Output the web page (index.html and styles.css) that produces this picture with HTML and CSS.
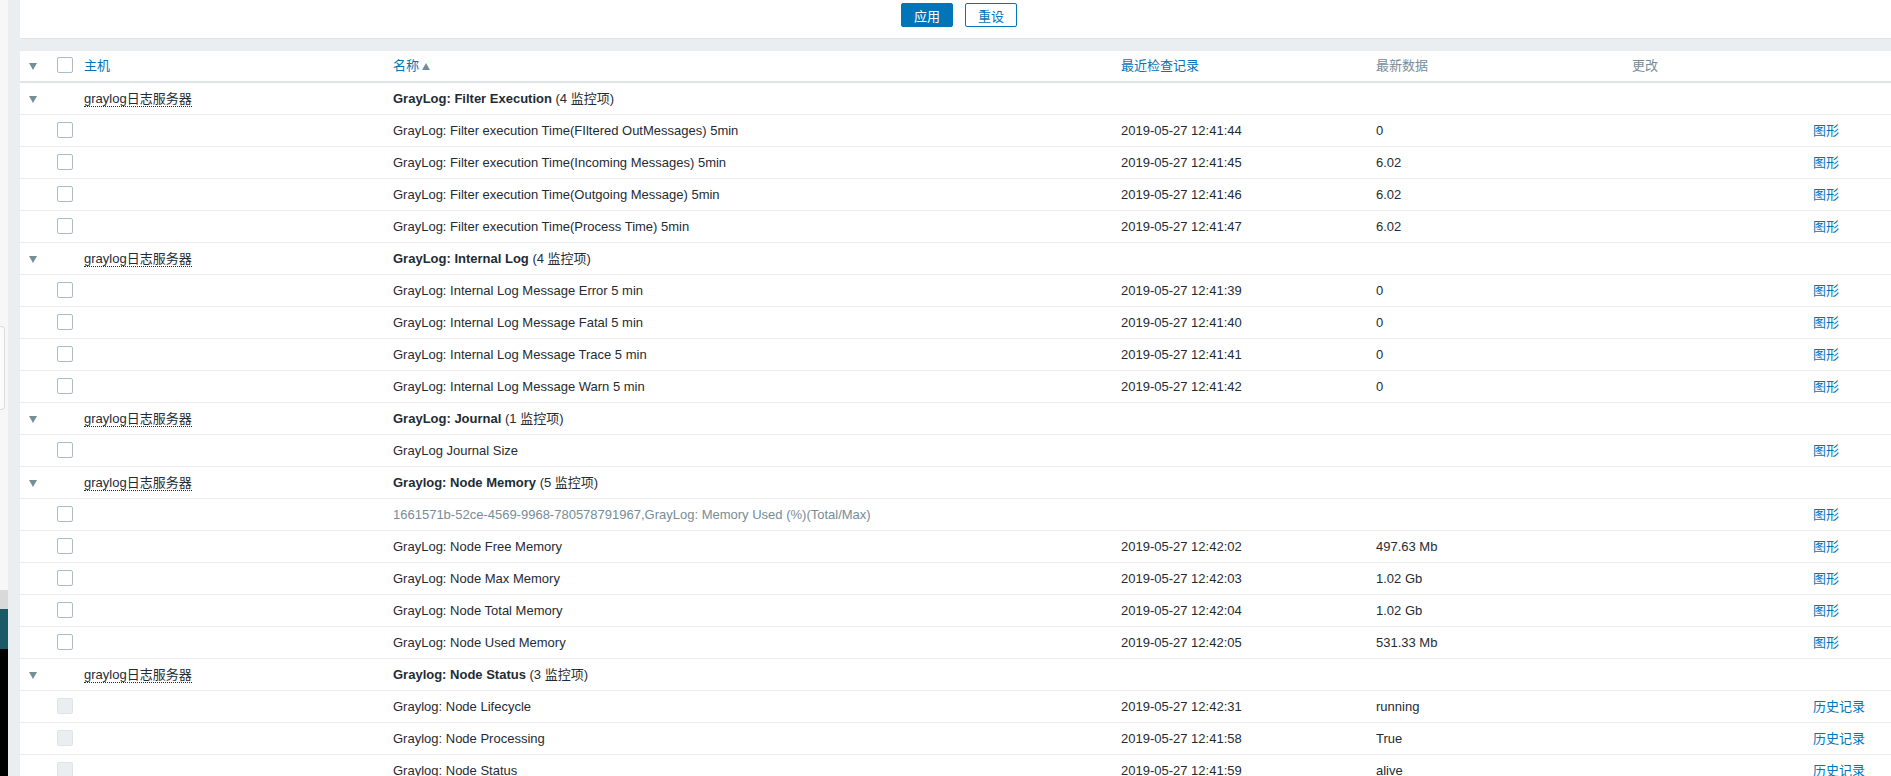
FILE: index.html
```html
<!DOCTYPE html>
<html lang="zh">
<head>
<meta charset="utf-8">
<title>最新数据</title>
<link rel="stylesheet" href="styles.css">
</head>
<body>
<div class="page">
  <div class="side">
    <div class="side-top"></div>
    <div class="side-box"></div>
    <div class="side-mid"></div>
    <div class="side-gray"></div>
    <div class="side-teal"></div>
    <div class="side-black"></div>
  </div>
  <main class="main">
    <div class="filter">
      <div class="btns">
        <button class="btn primary">应用</button>
        <button class="btn alt">重设</button>
      </div>
    </div>
    <div class="panel">
      <table class="list">
        <colgroup>
          <col class="c-tog"><col class="c-chk"><col class="c-host"><col class="c-name"><col class="c-time"><col class="c-val"><col class="c-chg"><col>
        </colgroup>
        <thead>
          <tr>
            <th class="tog"><span class="tri"></span></th>
            <th class="chk"><span class="box"></span></th>
            <th><a class="lnk">主机</a></th>
            <th><a class="lnk">名称</a><span class="up"></span></th>
            <th><a class="lnk">最近检查记录</a></th>
            <th class="muted">最新数据</th>
            <th class="muted">更改</th>
            <th></th>
          </tr>
        </thead>
        <tbody>
          <tr class="grp">
            <td class="tog"><span class="tri"></span></td><td></td>
            <td><span class="host">graylog日志服务器</span></td>
            <td colspan="5"><b>GrayLog: Filter Execution</b> (4 监控项)</td>
          </tr>
          <tr><td></td><td class="chk"><span class="box"></span></td><td></td><td>GrayLog: Filter execution Time(FIltered OutMessages) 5min</td><td>2019-05-27 12:41:44</td><td>0</td><td></td><td><a class="lnk">图形</a></td></tr>
          <tr><td></td><td class="chk"><span class="box"></span></td><td></td><td>GrayLog: Filter execution Time(Incoming Messages) 5min</td><td>2019-05-27 12:41:45</td><td>6.02</td><td></td><td><a class="lnk">图形</a></td></tr>
          <tr><td></td><td class="chk"><span class="box"></span></td><td></td><td>GrayLog: Filter execution Time(Outgoing Message) 5min</td><td>2019-05-27 12:41:46</td><td>6.02</td><td></td><td><a class="lnk">图形</a></td></tr>
          <tr><td></td><td class="chk"><span class="box"></span></td><td></td><td>GrayLog: Filter execution Time(Process Time) 5min</td><td>2019-05-27 12:41:47</td><td>6.02</td><td></td><td><a class="lnk">图形</a></td></tr>

          <tr class="grp">
            <td class="tog"><span class="tri"></span></td><td></td>
            <td><span class="host">graylog日志服务器</span></td>
            <td colspan="5"><b>GrayLog: Internal Log</b> (4 监控项)</td>
          </tr>
          <tr><td></td><td class="chk"><span class="box"></span></td><td></td><td>GrayLog: Internal Log Message Error 5 min</td><td>2019-05-27 12:41:39</td><td>0</td><td></td><td><a class="lnk">图形</a></td></tr>
          <tr><td></td><td class="chk"><span class="box"></span></td><td></td><td>GrayLog: Internal Log Message Fatal 5 min</td><td>2019-05-27 12:41:40</td><td>0</td><td></td><td><a class="lnk">图形</a></td></tr>
          <tr><td></td><td class="chk"><span class="box"></span></td><td></td><td>GrayLog: Internal Log Message Trace 5 min</td><td>2019-05-27 12:41:41</td><td>0</td><td></td><td><a class="lnk">图形</a></td></tr>
          <tr><td></td><td class="chk"><span class="box"></span></td><td></td><td>GrayLog: Internal Log Message Warn 5 min</td><td>2019-05-27 12:41:42</td><td>0</td><td></td><td><a class="lnk">图形</a></td></tr>

          <tr class="grp">
            <td class="tog"><span class="tri"></span></td><td></td>
            <td><span class="host">graylog日志服务器</span></td>
            <td colspan="5"><b>GrayLog: Journal</b> (1 监控项)</td>
          </tr>
          <tr><td></td><td class="chk"><span class="box"></span></td><td></td><td>GrayLog Journal Size</td><td></td><td></td><td></td><td><a class="lnk">图形</a></td></tr>

          <tr class="grp">
            <td class="tog"><span class="tri"></span></td><td></td>
            <td><span class="host">graylog日志服务器</span></td>
            <td colspan="5"><b>Graylog: Node Memory</b> (5 监控项)</td>
          </tr>
          <tr><td></td><td class="chk"><span class="box"></span></td><td></td><td class="muted">1661571b-52ce-4569-9968-780578791967,GrayLog: Memory Used (%)(Total/Max)</td><td></td><td></td><td></td><td><a class="lnk">图形</a></td></tr>
          <tr><td></td><td class="chk"><span class="box"></span></td><td></td><td>GrayLog: Node Free Memory</td><td>2019-05-27 12:42:02</td><td>497.63 Mb</td><td></td><td><a class="lnk">图形</a></td></tr>
          <tr><td></td><td class="chk"><span class="box"></span></td><td></td><td>GrayLog: Node Max Memory</td><td>2019-05-27 12:42:03</td><td>1.02 Gb</td><td></td><td><a class="lnk">图形</a></td></tr>
          <tr><td></td><td class="chk"><span class="box"></span></td><td></td><td>GrayLog: Node Total Memory</td><td>2019-05-27 12:42:04</td><td>1.02 Gb</td><td></td><td><a class="lnk">图形</a></td></tr>
          <tr><td></td><td class="chk"><span class="box"></span></td><td></td><td>GrayLog: Node Used Memory</td><td>2019-05-27 12:42:05</td><td>531.33 Mb</td><td></td><td><a class="lnk">图形</a></td></tr>

          <tr class="grp">
            <td class="tog"><span class="tri"></span></td><td></td>
            <td><span class="host">graylog日志服务器</span></td>
            <td colspan="5"><b>Graylog: Node Status</b> (3 监控项)</td>
          </tr>
          <tr><td></td><td class="chk"><span class="box off"></span></td><td></td><td>Graylog: Node Lifecycle</td><td>2019-05-27 12:42:31</td><td>running</td><td></td><td><a class="lnk">历史记录</a></td></tr>
          <tr><td></td><td class="chk"><span class="box off"></span></td><td></td><td>Graylog: Node Processing</td><td>2019-05-27 12:41:58</td><td>True</td><td></td><td><a class="lnk">历史记录</a></td></tr>
          <tr><td></td><td class="chk"><span class="box off"></span></td><td></td><td>Graylog: Node Status</td><td>2019-05-27 12:41:59</td><td>alive</td><td></td><td><a class="lnk">历史记录</a></td></tr>
        </tbody>
      </table>
    </div>
  </main>
</div>
</body>
</html>
```

FILE: styles.css
```css
html, body {
  margin: 0;
  padding: 0;
}
body {
  font-family: "Liberation Sans", Arial, "Noto Sans CJK SC", sans-serif;
  font-size: 13px;
  color: #1f2c33;
  background: #ebeef0;
  height: 776px;
  overflow: hidden;
}
.page {
  display: flex;
  height: 776px;
}
.side {
  width: 8px;
  flex: none;
  display: flex;
  flex-direction: column;
  background: #f7f7f7;
}
.side-top {
  height: 326px;
  flex: none;
}
.side-box {
  height: 82px;
  width: 4px;
  flex: none;
  border: 1px solid #dcdcdc;
  border-left: 0;
  border-radius: 0 4px 4px 0;
  background: #fbfbfb;
}
.side-mid {
  height: 180px;
  flex: none;
}
.side-gray {
  height: 19px;
  flex: none;
  background: #d9d9d9;
}
.side-teal {
  height: 40px;
  flex: none;
  background: #1a5965;
}
.side-black {
  flex: 1;
  background: #000;
}
.main {
  flex: 1;
  min-width: 0;
  padding-left: 12px;
  display: flex;
  flex-direction: column;
  gap: 12px;
}
.filter {
  flex: none;
  height: 38px;
  background: #fff;
  border-bottom: 1px solid #dfe4e7;
}
.btns {
  display: flex;
  justify-content: center;
  gap: 12px;
  padding: 3px 0 0 7px;
}
.btn {
  height: 24px;
  width: 52px;
  padding: 0;
  font-family: inherit;
  font-size: 13px;
  border-radius: 2px;
  border: 1px solid #0275b8;
}
.btn.primary {
  background: #0275b8;
  color: #fff;
}
.btn.alt {
  background: #fff;
  color: #0275b8;
}
.panel {
  flex: 1;
  min-height: 0;
  overflow: hidden;
  background: #fff;
}
.list {
  width: 100%;
  border-collapse: collapse;
  table-layout: fixed;
}
.c-tog { width: 32px; }
.c-chk { width: 27px; }
.c-host { width: 309px; }
.c-name { width: 728px; }
.c-time { width: 255px; }
.c-val { width: 256px; }
.c-chg { width: 181px; }
.list th, .list td {
  text-align: left;
  font-weight: normal;
  padding: 8px 5px;
  line-height: 15px;
  height: 15px;
  white-space: nowrap;
  overflow: hidden;
  vertical-align: middle;
}
.list th {
  padding: 7px 5px 8px;
  border-bottom: 2px solid #dfe4e7;
}
.list td {
  border-bottom: 1px solid #ebeef0;
}
.list td.chk {
  padding-top: 7px;
  padding-bottom: 8px;
  height: 16px;
}
.list th.chk {
  padding-top: 6px;
  padding-bottom: 8px;
  height: 16px;
}
.list .tog {
  padding-left: 9px;
}
.tri {
  display: inline-block;
  width: 0;
  height: 0;
  border-left: 4px solid transparent;
  border-right: 4px solid transparent;
  border-top: 7px solid #768d99;
  vertical-align: middle;
}
.up {
  display: inline-block;
  width: 0;
  height: 0;
  margin-left: 3px;
  border-left: 4px solid transparent;
  border-right: 4px solid transparent;
  border-bottom: 7px solid #768d99;
  vertical-align: 0;
}
.box {
  display: block;
  width: 14px;
  height: 14px;
  border: 1px solid #acbbc4;
  border-radius: 2px;
  background: #fff;
}
.box.off {
  background: #ebeef0;
  border-color: #dfe4e7;
}
.lnk {
  color: #0275b8;
  text-decoration: none;
}
.muted {
  color: #768d99;
}
.host {
  border-bottom: 1px dotted #1f2c33;
}
.grp b {
  font-weight: bold;
}
```
